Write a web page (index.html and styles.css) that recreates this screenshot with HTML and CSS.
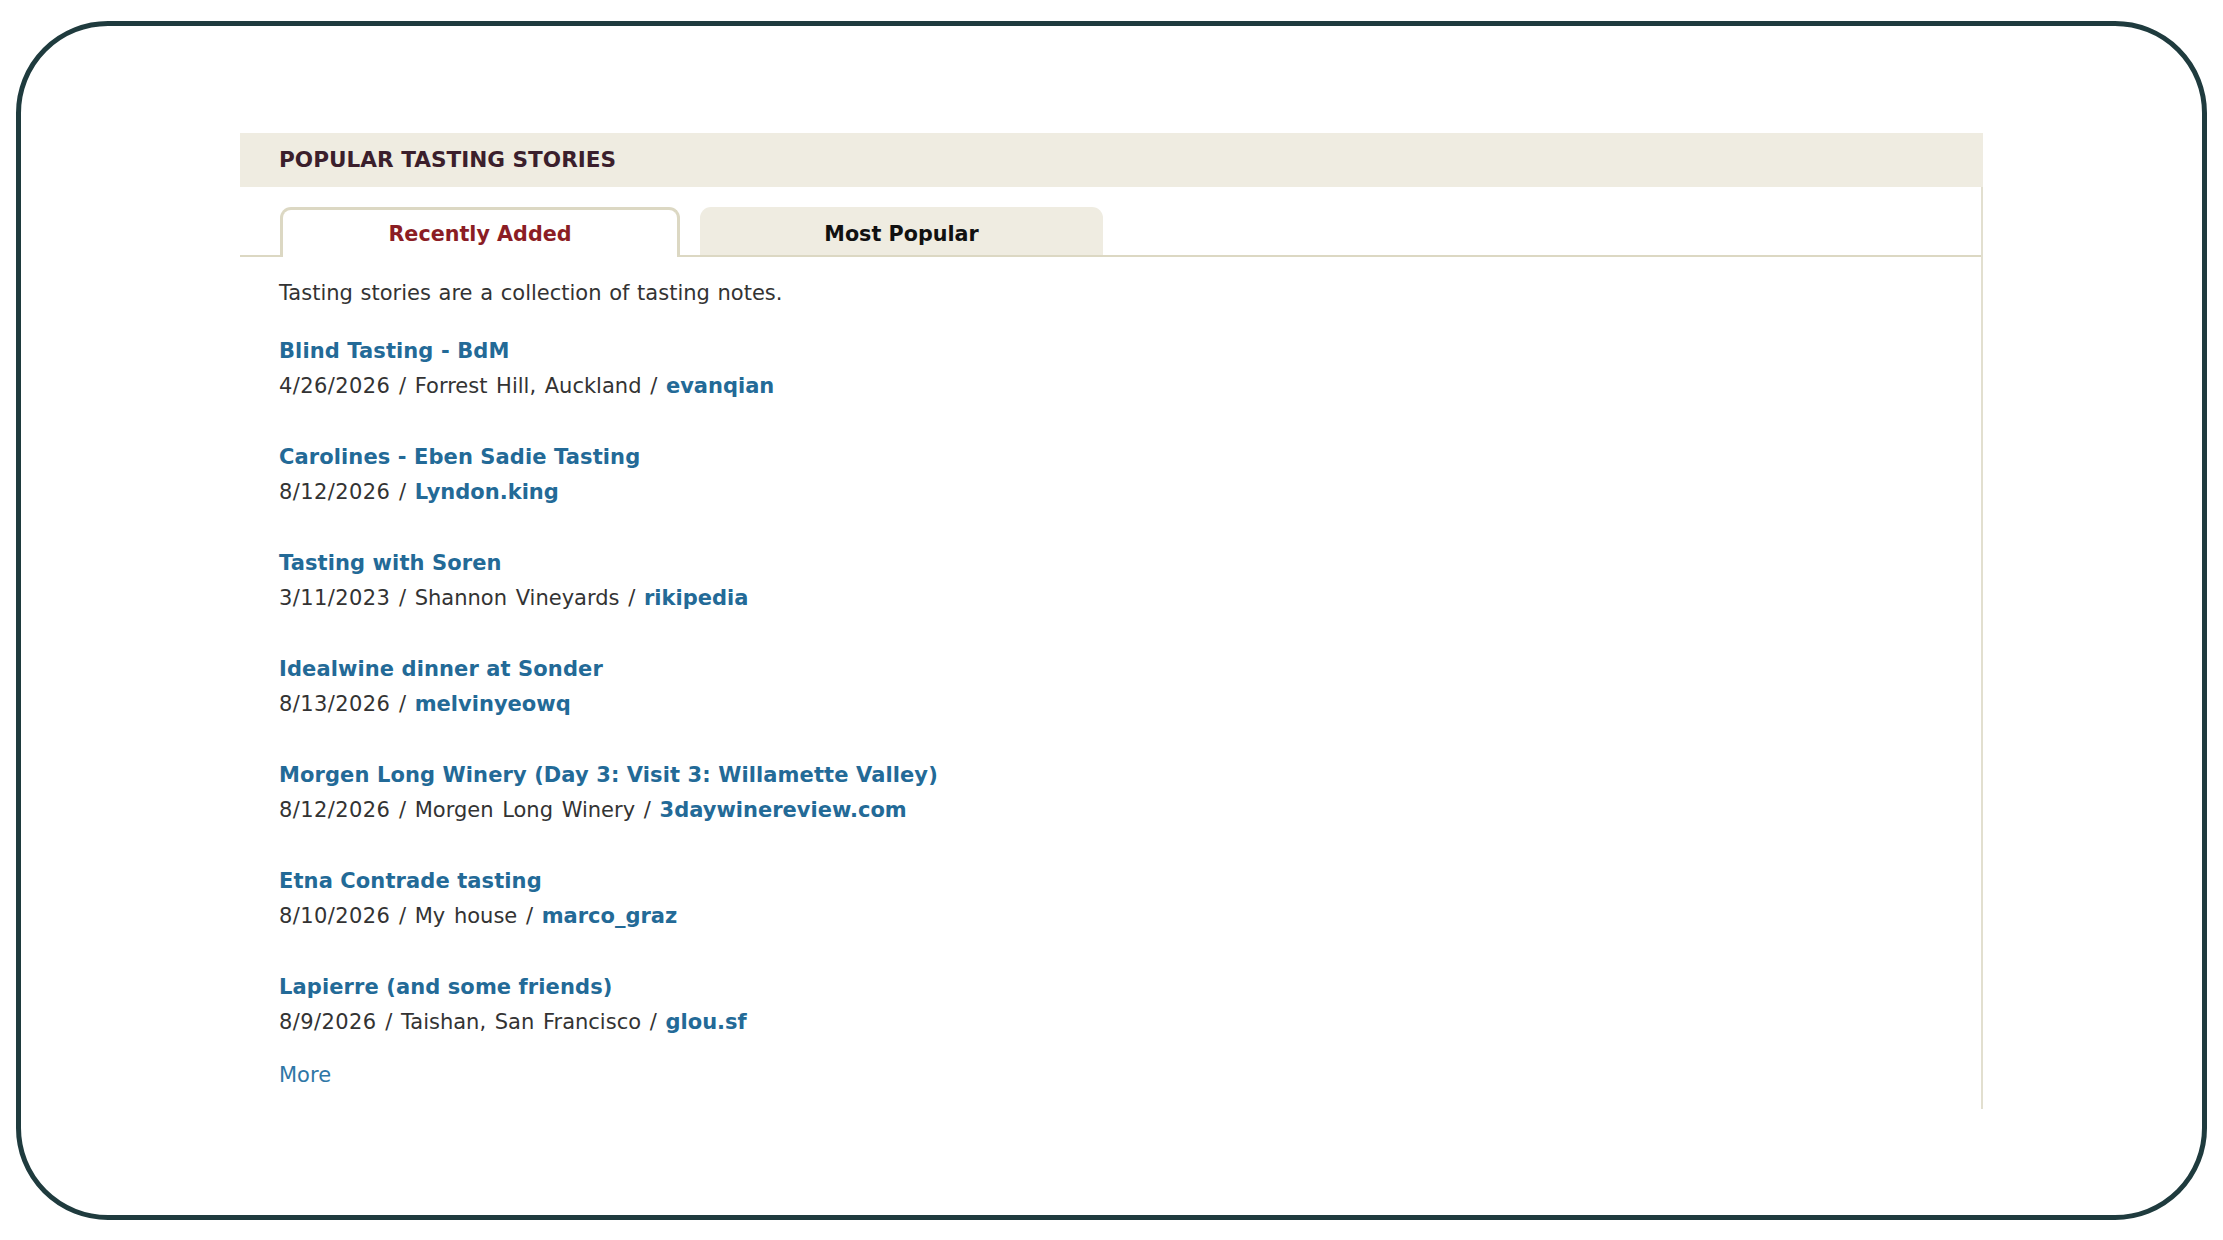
FILE: index.html
```html
<!DOCTYPE html>
<html lang="en">
<head>
<meta charset="utf-8">
<title>Popular Tasting Stories</title>
<link rel="stylesheet" href="styles.css">
</head>
<body>
<div class="frame">
  <section class="panel">
    <header class="panel-head">POPULAR TASTING STORIES</header>
    <nav class="tabs">
      <a class="tab tab-active" href="#">Recently Added</a>
      <a class="tab tab-idle" href="#">Most Popular</a>
    </nav>
    <div class="panel-body">
      <p class="intro">Tasting stories are a collection of tasting notes.</p>
      <ul class="stories">
        <li class="story">
          <a class="story-title" href="#">Blind Tasting - BdM</a>
          <div class="story-meta"><span class="date">4/26/2026</span> / Forrest Hill, Auckland / <a class="user" href="#">evanqian</a></div>
        </li>
        <li class="story">
          <a class="story-title" href="#">Carolines - Eben Sadie Tasting</a>
          <div class="story-meta"><span class="date">8/12/2026</span> / <a class="user" href="#">Lyndon.king</a></div>
        </li>
        <li class="story">
          <a class="story-title" href="#">Tasting with Soren</a>
          <div class="story-meta"><span class="date">3/11/2023</span> / Shannon Vineyards / <a class="user" href="#">rikipedia</a></div>
        </li>
        <li class="story">
          <a class="story-title" href="#">Idealwine dinner at Sonder</a>
          <div class="story-meta"><span class="date">8/13/2026</span> / <a class="user" href="#">melvinyeowq</a></div>
        </li>
        <li class="story">
          <a class="story-title" href="#">Morgen Long Winery (Day 3: Visit 3: Willamette Valley)</a>
          <div class="story-meta"><span class="date">8/12/2026</span> / Morgen Long Winery / <a class="user" href="#">3daywinereview.com</a></div>
        </li>
        <li class="story">
          <a class="story-title" href="#">Etna Contrade tasting</a>
          <div class="story-meta"><span class="date">8/10/2026</span> / My house / <a class="user" href="#">marco_graz</a></div>
        </li>
        <li class="story">
          <a class="story-title" href="#">Lapierre (and some friends)</a>
          <div class="story-meta"><span class="date">8/9/2026</span> / Taishan, San Francisco / <a class="user" href="#">glou.sf</a></div>
        </li>
      </ul>
      <a class="more" href="#">More</a>
    </div>
  </section>
</div>
</body>
</html>
```
FILE: styles.css
```css
html, body {
  margin: 0;
  padding: 0;
  background: #ffffff;
}

body {
  font-family: "DejaVu Sans", Verdana, sans-serif;
  color: #333333;
  padding: 21px 16px 0 16px;
}

.frame {
  box-sizing: border-box;
  width: 2191px;
  height: 1199px;
  border: 5px solid #1f3b3e;
  border-radius: 92px;
  padding: 107px 0 0 219px;
}

.panel {
  width: 1743px;
  box-sizing: border-box;
  border-right: 2px solid #e2dfcf;
}

.panel-head {
  height: 54px;
  line-height: 54px;
  background: #efece1;
  padding-left: 39px;
  font-size: 21.6px;
  font-weight: bold;
  color: #3b1f2c;
  margin-right: -2px;
}

.tabs {
  display: flex;
  gap: 20px;
  margin-top: 20px;
  padding-left: 40px;
  height: 48px;
  border-bottom: 2px solid #dcd8c3;
}

.tab {
  display: block;
  box-sizing: border-box;
  text-align: center;
  text-decoration: none;
  font-weight: bold;
  font-size: 20.7px;
  line-height: 24px;
}

.tab-active {
  width: 400px;
  margin-bottom: -2px;
  padding-top: 12px;
  background: #ffffff;
  border: 3px solid #dcd8c3;
  border-bottom: none;
  border-radius: 11px 11px 0 0;
  color: #8b1d24;
}

.tab-idle {
  width: 403px;
  padding-top: 15px;
  background: #efece1;
  border-radius: 11px 11px 0 0;
  color: #111111;
}

.panel-body {
  padding: 19px 0 16px 39px;
  font-size: 21px;
  line-height: 35px;
}

.intro {
  margin: 0;
  word-spacing: 1px;
}

.stories {
  list-style: none;
  margin: 22.5px 0 0 0;
  padding: 0;
  display: flex;
  flex-direction: column;
  gap: 36px;
}

.story-title {
  display: block;
  font-weight: bold;
  letter-spacing: 0.1px;
  color: #236a97;
  text-decoration: none;
}

.story-meta {
  color: #333333;
  word-spacing: 2px;
}

.date {
  letter-spacing: 0.4px;
}

.user {
  font-weight: bold;
  color: #236a97;
  text-decoration: none;
  word-spacing: 0;
}

.more {
  display: inline-block;
  margin-top: 18.5px;
  color: #2f77a6;
  text-decoration: none;
}
```
